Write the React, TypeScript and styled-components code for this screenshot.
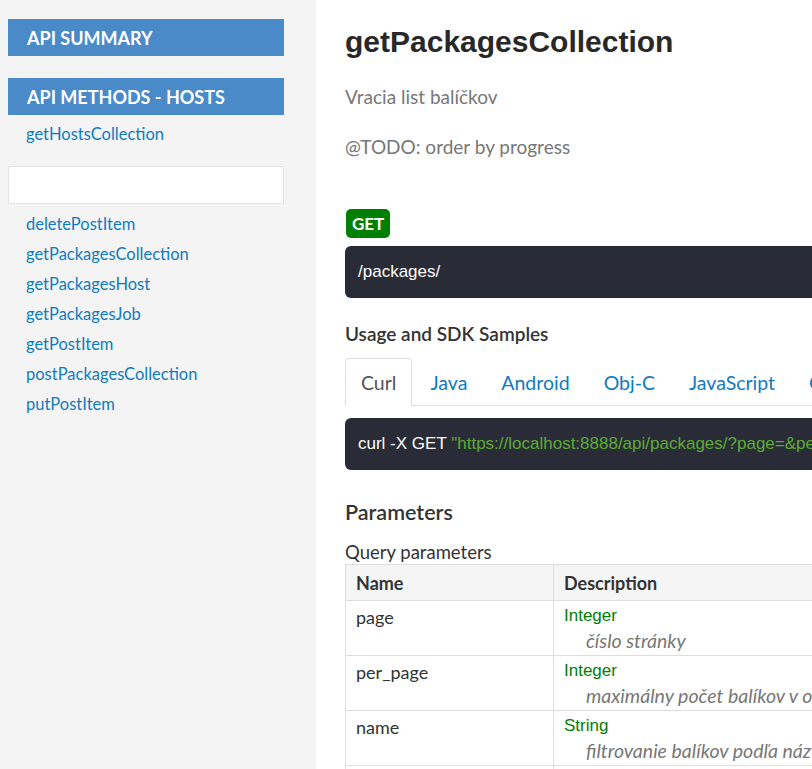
import React from 'react';
import styled, { createGlobalStyle } from 'styled-components';

const GlobalStyle = createGlobalStyle`
  html, body {
    margin: 0;
    padding: 0;
    background: #fff;
    overflow: hidden;
  }
  body {
    font-family: Lato, "Open Sans", sans-serif;
    color: #333;
  }
`;

const sans = `Lato, "Open Sans", sans-serif`;
const helvetica = `"Liberation Sans", Arial, sans-serif`;

const Page = styled.div`
  display: flex;
  width: 1200px;
  height: 769px;
  overflow: hidden;
`;

const Sidebar = styled.nav`
  flex-shrink: 0;
  width: 316px;
  background: #f4f4f4;
  padding: 19px 32px 0 8px;
  box-sizing: border-box;
`;

const NavHeader = styled.div<{ $gap?: number }>`
  height: 37px;
  line-height: 38px;
  background: #4a8ac9;
  color: #fff;
  font-family: ${sans};
  font-weight: 700;
  font-size: 18px;
  padding-left: 19px;
  margin-bottom: ${p => p.$gap ?? 0}px;
  text-transform: uppercase;
`;

const NavLink = styled.a<{ $top?: number }>`
  display: block;
  margin-top: ${p => p.$top ?? 0}px;
  padding-left: 18px;
  font-family: ${sans};
  font-size: 16.5px;
  line-height: 30px;
  color: #0f7bbf;
  text-decoration: none;
`;

const SearchBox = styled.div`
  height: 38px;
  margin: 17px 0 5px;
  background: #fff;
  border: 1px solid #e3e3e3;
  box-sizing: border-box;
`;

const Main = styled.main`
  flex: 1;
  padding: 24px 0 0 29px;
`;

const Title = styled.h1`
  margin: 0;
  font-family: ${helvetica};
  font-size: 30px;
  font-weight: 700;
  color: #282828;
  line-height: 36px;
`;

const Note = styled.p<{ $top: number }>`
  margin: ${p => p.$top}px 0 0;
  font-family: ${sans};
  font-size: 19px;
  line-height: 26px;
  color: #777;
`;

const Badge = styled.span`
  display: inline-block;
  margin: 49px 0 0 1px;
  padding: 0 6px;
  height: 29px;
  line-height: 29px;
  background: #008000;
  color: #fff;
  border-radius: 5px;
  font-family: ${sans};
  font-weight: 700;
  font-size: 17px;
`;

const CodeBlock = styled.pre<{ $top: number }>`
  margin: ${p => p.$top}px 0 0;
  height: 52px;
  line-height: 52px;
  padding: 0 13px;
  background: #292b36;
  border-radius: 6px;
  color: #fff;
  font-family: ${helvetica};
  font-size: 17px;
  white-space: nowrap;
  overflow: hidden;
`;

const StringLit = styled.span`
  color: #5cab35;
`;

const SectionTitle = styled.h3<{ $top: number; $size?: number }>`
  margin: ${p => p.$top}px 0 0;
  font-family: ${sans};
  font-weight: 600;
  font-size: ${p => p.$size ?? 19}px;
  line-height: 28px;
  color: #333;
`;

const Tabs = styled.ul`
  display: flex;
  list-style: none;
  margin: 10px 0 0;
  padding: 0;
  border-bottom: 1px solid #ddd;
  white-space: nowrap;
`;

const Tab = styled.li<{ $active?: boolean }>`
  height: 46px;
  line-height: 48px;
  padding: 0 15px;
  margin: 0 2px -1px 0;
  font-family: ${sans};
  font-size: 19.5px;
  color: ${p => (p.$active ? '#555' : '#0f7bbf')};
  background: ${p => (p.$active ? '#fff' : 'transparent')};
  border: 1px solid ${p => (p.$active ? '#ddd' : 'transparent')};
  border-bottom-color: ${p => (p.$active ? '#fff' : 'transparent')};
  border-radius: 4px 4px 0 0;
`;

const SubTitle = styled.div`
  margin-top: 15px;
  font-family: ${sans};
  font-size: 18.5px;
  line-height: 22px;
  color: #333;
`;

const Table = styled.table`
  margin-top: 1px;
  border-collapse: collapse;
  width: 900px;
  font-family: ${sans};
  font-size: 18px;
`;

const HeadCell = styled.th`
  text-align: left;
  font-weight: 700;
  background: #f5f5f5;
  border: 1px solid #ddd;
  height: 35px;
  padding: 0 10px;
  color: #333;
  &:first-child {
    width: 187px;
  }
`;

const Cell = styled.td`
  vertical-align: top;
  border: 1px solid #ddd;
  padding: 4px 10px 0;
  color: #333;
  line-height: 24px;
`;

const TypeName = styled.div`
  font-family: ${helvetica};
  font-size: 17px;
  line-height: 22px;
  color: #008000;
`;

const ParamDesc = styled.div`
  padding-left: 22px;
  font-style: italic;
  font-size: 19.5px;
  line-height: 28px;
  color: #777;
  white-space: nowrap;
`;

const methods = [
  'deletePostItem',
  'getPackagesCollection',
  'getPackagesHost',
  'getPackagesJob',
  'getPostItem',
  'postPackagesCollection',
  'putPostItem',
];

const tabs = ['Curl', 'Java', 'Android', 'Obj-C', 'JavaScript', 'C#'];

const params = [
  { name: 'page', type: 'Integer', desc: 'číslo stránky' },
  { name: 'per_page', type: 'Integer', desc: 'maximálny počet balíkov v odpovedi' },
  { name: 'name', type: 'String', desc: 'filtrovanie balíkov podľa názvu' },
  { name: 'host', type: 'String', desc: 'filtrovanie balíkov podľa hostu' },
];

export default function App() {
  return (
    <>
      <GlobalStyle />
      <Page>
        <Sidebar>
          <NavHeader $gap={22}>API Summary</NavHeader>
          <NavHeader>API Methods - Hosts</NavHeader>
          <NavLink href="#" $top={4}>getHostsCollection</NavLink>
          <SearchBox />
          {methods.map(m => (
            <NavLink key={m} href="#">{m}</NavLink>
          ))}
        </Sidebar>
        <Main>
          <Title>getPackagesCollection</Title>
          <Note $top={24}>Vracia list balíčkov</Note>
          <Note $top={24}>@TODO: order by progress</Note>
          <Badge>GET</Badge>
          <CodeBlock $top={8}>/packages/</CodeBlock>
          <SectionTitle $top={22}>Usage and SDK Samples</SectionTitle>
          <Tabs>
            {tabs.map((t, i) => (
              <Tab key={t} $active={i === 0}>{t}</Tab>
            ))}
          </Tabs>
          <CodeBlock $top={12}>
            curl -X GET <StringLit>"https://localhost:8888/api/packages/?page=&amp;per_page=&amp;name="</StringLit>
          </CodeBlock>
          <SectionTitle $top={28} $size={21.5}>Parameters</SectionTitle>
          <SubTitle>Query parameters</SubTitle>
          <Table>
            <thead>
              <tr>
                <HeadCell>Name</HeadCell>
                <HeadCell>Description</HeadCell>
              </tr>
            </thead>
            <tbody>
              {params.map(p => (
                <tr key={p.name}>
                  <Cell>{p.name}</Cell>
                  <Cell>
                    <TypeName>{p.type}</TypeName>
                    <ParamDesc>{p.desc}</ParamDesc>
                  </Cell>
                </tr>
              ))}
            </tbody>
          </Table>
        </Main>
      </Page>
    </>
  );
}
